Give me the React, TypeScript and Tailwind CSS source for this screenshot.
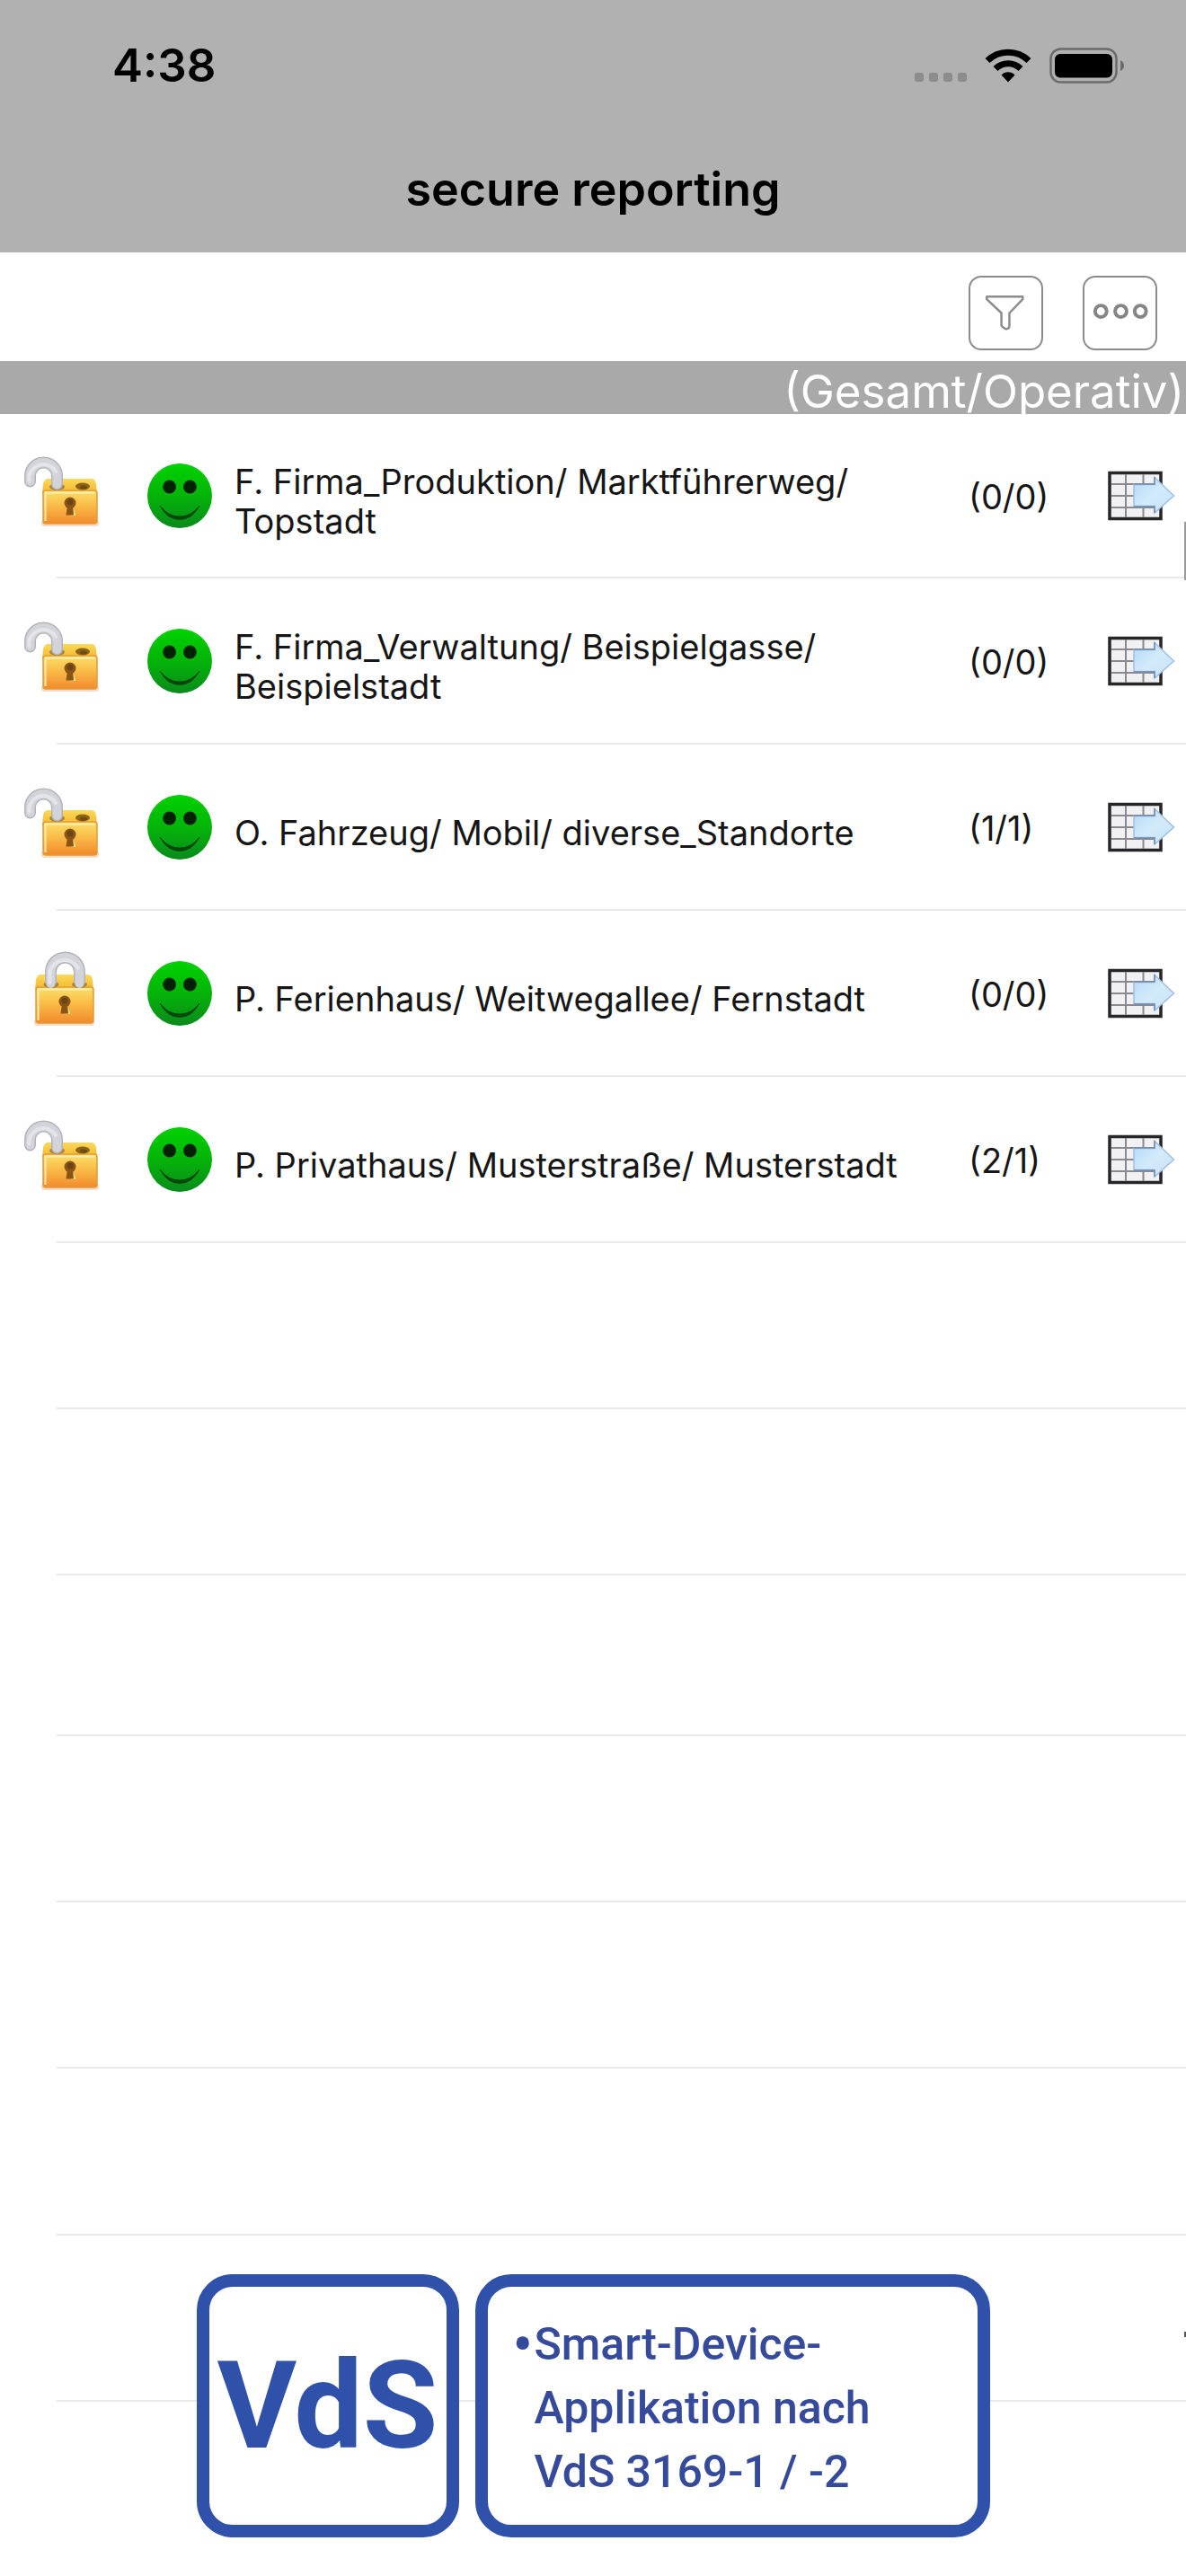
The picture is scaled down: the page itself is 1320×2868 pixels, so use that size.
type Site = {
    id: number
    name: string
    locked: boolean
    total: number
    operative: number
}

const sites: Site[] = [
    {id: 1, name: "F. Firma_Produktion/ Marktführerweg/ Topstadt", locked: false, total: 0, operative: 0},
    {id: 2, name: "F. Firma_Verwaltung/ Beispielgasse/ Beispielstadt", locked: false, total: 0, operative: 0},
    {id: 3, name: "O. Fahrzeug/ Mobil/ diverse_Standorte", locked: false, total: 1, operative: 1},
    {id: 4, name: "P. Ferienhaus/ Weitwegallee/ Fernstadt", locked: true, total: 0, operative: 0},
    {id: 5, name: "P. Privathaus/ Musterstraße/ Musterstadt", locked: false, total: 2, operative: 1},
]

const emptyRows = ["h-[183px]", "h-[183px]", "h-[177px]", "h-[183px]", "h-[183px]", "h-[184px]", "h-[183px]"]

// shared gradients, referenced by id from the row icons
function IconDefs() {
    return (
        <svg width="0" height="0" className="absolute" aria-hidden="true">
            <defs>
                <linearGradient id="lock-top" x1="0" y1="0" x2="0" y2="1">
                    <stop offset="0" stopColor="#fbd95a" />
                    <stop offset="1" stopColor="#f3b62c" />
                </linearGradient>
                <linearGradient id="lock-front" x1="0" y1="0" x2="0" y2="1">
                    <stop offset="0" stopColor="#fbe06a" />
                    <stop offset="0.45" stopColor="#fabc48" />
                    <stop offset="1" stopColor="#f28a2c" />
                </linearGradient>
                <linearGradient id="smile" x1="0" y1="0" x2="0" y2="1">
                    <stop offset="0" stopColor="#00d200" />
                    <stop offset="0.5" stopColor="#04b409" />
                    <stop offset="1" stopColor="#0a8a1c" />
                </linearGradient>
                <linearGradient id="arrow" x1="0" y1="0" x2="1" y2="1">
                    <stop offset="0" stopColor="#b2d7f4" />
                    <stop offset="0.5" stopColor="#d3ebfb" />
                    <stop offset="1" stopColor="#c6e0f7" />
                </linearGradient>
            </defs>
        </svg>
    )
}

function Keyhole({x, y}: { x: number; y: number }) {
    return (
        <g transform={`translate(${x} ${y})`}>
            <path d="M3 4 L6.5 14 L1 14Z" fill="#fde28a" />
            <circle r="6.5" fill="#8a5413" />
            <path d="M-3 3 H3 L4 13.5 H-4.5Z" fill="#8a5413" />
            <circle cy="-1" r="3.5" fill="#6b4518" />
        </g>
    )
}

function LockIcon({locked}: { locked: boolean }) {
    if (locked) {
        return (
            <svg viewBox="0 0 96 96" className="size-24 shrink-0" role="img" aria-label="Gesperrt">
                <rect x="18" y="77" width="67" height="7" rx="3" fill="#f3dccb" />
                <path d="M25 27 H78 Q82 27 83 33 L84 44 H19 L20 33 Q21 27 25 27Z" fill="url(#lock-top)" />
                <rect x="20" y="41" width="64" height="40" rx="3" fill="url(#lock-front)" stroke="#e39a33" strokeWidth="1.5" />
                <path d="M22.5 78 V43.5 H81.5" fill="none" stroke="#fdeeb0" strokeWidth="2" />
                <ellipse cx="37" cy="38" rx="8.5" ry="4" fill="#a88540" />
                <ellipse cx="68.5" cy="38" rx="8.5" ry="4" fill="#a88540" />
                <path d="M36.5 37 V24 A16 16 0 0 1 68.5 24 V37" fill="none" stroke="#b3b4b9" strokeWidth="13" />
                <path d="M36.5 37 V24 A16 16 0 0 1 68.5 24 V37" fill="none" stroke="#d3d4d9" strokeWidth="10" strokeLinecap="round" />
                <path d="M35.5 36 V24 A17 17 0 0 1 67 20" fill="none" stroke="#e4e5e9" strokeWidth="4" strokeLinecap="round" />
                <Keyhole x={52} y={57} />
            </svg>
        )
    }

    return (
        <svg viewBox="0 0 96 96" className="size-24 shrink-0" role="img" aria-label="Entsperrt">
            <rect x="26" y="75" width="64" height="7" rx="3" fill="#f3dccb" />
            <path d="M33 29 H82 Q86 29 87 35 L88 46 H27 L28 35 Q29 29 33 29Z" fill="url(#lock-top)" />
            <rect x="28" y="42" width="60" height="37" rx="3" fill="url(#lock-front)" stroke="#e39a33" strokeWidth="1.5" />
            <path d="M30.5 76 V44.5 H85.5" fill="none" stroke="#fdeeb0" strokeWidth="2" />
            <ellipse cx="43.5" cy="38" rx="8.5" ry="4" fill="#a88540" />
            <ellipse cx="72" cy="37.5" rx="8" ry="4" fill="#8d6417" />
            <ellipse cx="73" cy="38.5" rx="4" ry="2" fill="#6d4c10" />
            <path d="M13.5 32 V26 A15 15 0 0 1 43.5 26 V35" fill="none" stroke="#b3b4b9" strokeWidth="13" strokeLinecap="round" />
            <path d="M13.5 32 V26 A15 15 0 0 1 43.5 26 V35" fill="none" stroke="#d3d4d9" strokeWidth="10" strokeLinecap="round" />
            <path d="M12.5 31 V26 A16 16 0 0 1 42 21" fill="none" stroke="#e4e5e9" strokeWidth="4" strokeLinecap="round" />
            <Keyhole x={58} y={56} />
        </svg>
    )
}

function SmileIcon() {
    return (
        <svg viewBox="0 0 74 74" className="w-[74px] shrink-0" role="img" aria-label="In Ordnung">
            <circle cx="37" cy="37" r="36" fill="url(#smile)" />
            <circle cx="25.6" cy="27" r="7.4" fill="#020" />
            <circle cx="48.4" cy="27" r="7.4" fill="#020" />
            <path d="M15 48 Q24 60 37 60 Q50 60 59 48 Q51 63.5 37 63.5 Q23 63.5 15 48Z" fill="#04470c" stroke="#04470c" strokeWidth="0.8" />
        </svg>
    )
}

function TableArrowIcon() {
    return (
        <svg viewBox="0 0 76 58" className="w-[76px]" aria-hidden="true">
            <rect x="3" y="3.5" width="57" height="51" fill="#f1f0f2" stroke="#262628" strokeWidth="3.5" />
            <path d="M21 5 V53 M40.5 5 V53 M5 16 H58 M5 29 H58 M5 42 H58" stroke="#8a8a8e" strokeWidth="2" />
            <path d="M30 16.5 H53 V8.5 L74.500 29 L53 48 V40.500 H30Z" fill="url(#arrow)" stroke="#a3bfe2" strokeWidth="1.5" />
            <path d="M30 16 H53 V8 M30 41 H53 V48" fill="none" stroke="#6f89ab" strokeWidth="1.5" />
        </svg>
    )
}

function StatusBar() {
    return (
        <div className="flex h-[145px] items-center justify-between pl-[125px] pr-[68px]">
            <span className="text-[51px] font-semibold leading-none">4:38</span>
            <div className="flex items-center">
                <svg viewBox="0 0 60 40" className="mr-[19px] w-[60px]" aria-hidden="true">
                    <g fill="#8c8c8c">
                        <rect x="1" y="28" width="10" height="10" rx="3" />
                        <rect x="17" y="28" width="10" height="10" rx="3" />
                        <rect x="33" y="28" width="10" height="10" rx="3" />
                        <rect x="49" y="28" width="10" height="10" rx="3" />
                    </g>
                </svg>
                <svg viewBox="0 0 52 40" className="mr-5 w-[52px]" role="img" aria-label="WLAN">
                    <g fill="none" stroke="#000" strokeWidth="7">
                        <path d="M3 14.5 A33 33 0 0 1 49 14.5" />
                        <path d="M12 23.5 A20 20 0 0 1 40 23.5" />
                    </g>
                    <path d="M26 38.5 L18.5 30.5 A10.5 10.5 0 0 1 33.5 30.5Z" fill="#000" />
                </svg>
                <svg viewBox="0 0 84 40" className="w-[84px]" role="img" aria-label="Batterie">
                    <rect x="1.5" y="1.5" width="73" height="37" rx="11" fill="none" stroke="#6b6b6b" strokeWidth="2.5" />
                    <rect x="6" y="7" width="64" height="26.5" rx="6" fill="#000" />
                    <path d="M79 14 Q83 16 83 20 Q83 24 79 26Z" fill="#6b6b6b" />
                </svg>
            </div>
        </div>
    )
}

function Toolbar() {
    const button = "size-[83px] rounded-[14px] border-2 border-[#8c8c8c] bg-white"

    return (
        <div className="flex h-[121px] items-start justify-end gap-11 pr-8 pt-[26px]">
            <button className={button} aria-label="Filter">
                <svg viewBox="0 0 80 80" className="size-full" fill="none" stroke="#8c8c8c" strokeWidth="2.5">
                    <path d="M18.5 21.5 H59 V24.5 L44 40 V54 Q44 58 40.5 58 Q38 58 35 54 V40 L18.5 24.5Z" strokeLinejoin="round" />
                </svg>
            </button>
            <button className={button} aria-label="Mehr">
                <svg viewBox="0 0 80 80" className="size-full" fill="none" stroke="#858585" strokeWidth="4">
                    <circle cx="18.5" cy="38" r="6.5" />
                    <circle cx="41" cy="38" r="6.5" />
                    <circle cx="63" cy="38" r="6.5" />
                </svg>
            </button>
        </div>
    )
}

function Divider() {
    return <div className="ml-[63px] h-0.5 bg-[#e9e9e9]" />
}

function SiteRow({site}: { site: Site }) {
    return (
        <li className="group">
            <div className="flex h-[183px] items-center pl-5 pr-3 group-first:h-[181px]">
                <LockIcon locked={site.locked} />
                <div className="ml-[47px] flex">
                    <SmileIcon />
                </div>
                <p className="ml-6 flex-1 pt-3 text-[38px] leading-[44px]">{site.name}</p>
                <span className="w-[154px] pt-[2px] text-[38px] leading-[44px]">
                    ({site.total}/{site.operative})
                </span>
                <button aria-label={`${site.name} öffnen`}>
                    <TableArrowIcon />
                </button>
            </div>
            <Divider />
        </li>
    )
}

function VdsBadge() {
    return (
        <div className="absolute inset-x-0 bottom-[43px] flex justify-center gap-[18px] font-[Roboto,sans-serif] text-[#2f51a9]">
            <div className="flex h-[293px] w-[292px] items-center justify-center rounded-[40px] border-[14px] border-[#2f51a9] bg-white text-[136px] font-bold leading-none">
                VdS
            </div>
            <div className="flex h-[293px] w-[573px] items-center rounded-[40px] border-[14px] border-[#2f51a9] bg-white pl-7 pt-[6px] text-[50px] font-medium leading-[71px] text-[#354a9b]">
                <ul>
                    <li className="flex">
                        <span className="w-6 text-[64px]">•</span>
                        <span>
                            Smart-Device-
                            <br />
                            Applikation nach
                            <br />
                            VdS 3169-1 / -2
                        </span>
                    </li>
                </ul>
            </div>
        </div>
    )
}

export default function App() {
    return (
        <div className="relative min-h-screen overflow-hidden bg-white font-[Inter,sans-serif] text-black">
            <IconDefs />
            <header className="h-[281px] bg-[#b1b1b1]">
                <StatusBar />
                <h1 className="text-center text-[52px] font-semibold leading-[132px]">secure reporting</h1>
            </header>
            <Toolbar />
            <div className="h-[59px] bg-[#a9a9a9] pr-[2px] text-right text-[51px] leading-[68px] text-white">
                (Gesamt/Operativ)
            </div>

            <main className="relative">
                <ul className="text-[#161616]">
                    {sites.map((site: Site) => (
                        <SiteRow key={site.id} site={site} />
                    ))}
                </ul>
                {emptyRows.map((height, i) => (
                    <div key={i}>
                        <div className={height} />
                        <Divider />
                    </div>
                ))}
                {/* scroll indicator */}
                <div className="absolute right-0 top-[120px] h-[65px] w-0.5 bg-[#9a9a9a]" />
                <div className="absolute bottom-[72px] right-0 h-1.5 w-0.5 bg-[#555555]" />
            </main>

            <VdsBadge />
        </div>
    )
}
